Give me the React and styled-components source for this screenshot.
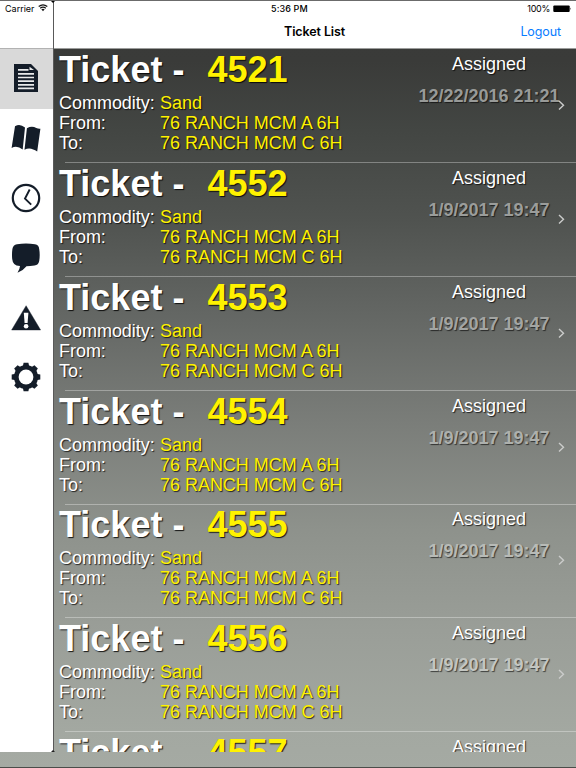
import React from "react";
import styled, { createGlobalStyle } from "styled-components";

const GlobalStyle = createGlobalStyle`
  * {
    box-sizing: border-box;
  }
  body {
    margin: 0;
    overflow: hidden;
  }
`;

const Screen = styled.div`
  width: 576px;
  height: 768px;
  display: flex;
  flex-direction: column;
  overflow: hidden;
  color: #000;
  font-family: Inter, "Liberation Sans", sans-serif;
  border-top: 1px solid #6b6b6b;
  border-bottom: 1px solid #4b4d4a;
  background: linear-gradient(
    to bottom,
    #393a38 0,
    #3a3b39 60px,
    #434643 130px,
    #505350 220px,
    #656865 320px,
    #7b7e7a 425px,
    #8e928c 530px,
    #9a9e98 630px,
    #a3a8a1 730px,
    #a5aaa3 767px
  );
`;

const Panels = styled.div`
  display: flex;
  height: 751px;
  overflow: hidden;
`;

const Sidebar = styled.div`
  width: 53px;
  flex-shrink: 0;
  display: flex;
  flex-direction: column;
  background: #fff;
`;

const SidebarHeader = styled.div`
  height: 48px;
  padding: 1px 0 0 5px;
  display: flex;
  align-items: flex-start;
  gap: 3px;
  border-bottom: 1px solid #b2b2b2;

  svg {
    margin-top: 2px;
  }
`;

const StatusText = styled.span`
  font-size: 9px;
  line-height: 13px;
  font-weight: ${(props) => (props.$bold ? 500 : 400)};
  letter-spacing: ${(props) => (props.$bold ? "0.1px" : props.$tight ? "-0.3px" : "0")};
  white-space: nowrap;
`;

const Tab = styled.div`
  height: 59.8px;
  padding: 0 0.5px 1px 0;
  display: flex;
  align-items: center;
  justify-content: center;
  background: ${(props) => (props.$active ? "#d9d9d9" : "#fff")};
`;

// thin line between the panels, with the small dark corners at both ends
const Divider = styled.div`
  position: relative;
  width: 1px;
  flex-shrink: 0;
  background: #595959;

  &::before,
  &::after {
    content: "";
    position: absolute;
    left: -2px;
    border: 2.5px solid transparent;
  }
  &::before {
    top: 0;
    border-top-color: #000;
    border-bottom: 0;
  }
  &::after {
    bottom: 0;
    border-bottom-color: #222;
    border-top: 0;
  }
`;

const Main = styled.div`
  flex: 1;
  min-width: 0;
  display: flex;
  flex-direction: column;
`;

const TopBar = styled.div`
  height: 48px;
  flex-shrink: 0;
  background: #fff;
  border-bottom: 1px solid #9b9c9b;
`;

const StatusRow = styled.div`
  height: 15px;
  padding: 1px 4px 0 217px;
  display: flex;
  justify-content: space-between;
`;

const Battery = styled.div`
  display: flex;
  gap: 3px;

  svg {
    margin-top: 3px;
  }
`;

const NavRow = styled.div`
  height: 32px;
  padding: 0 15px 0 230px;
  display: flex;
  justify-content: space-between;
  font-size: 12.5px;
  line-height: 32px;
`;

const Title = styled.span`
  font-weight: 600;
  letter-spacing: -0.1px;
`;

const Logout = styled.span`
  color: #087cff;
  letter-spacing: -0.1px;
`;

const List = styled.div`
  font-family: "Liberation Sans", sans-serif;
  font-size: 18px;
  line-height: 20px;
  color: #fff;
  text-shadow: 1px 1px 1px rgba(0, 0, 0, 0.75);
`;

const Row = styled.div`
  height: 113.85px;
  display: flex;
  background: linear-gradient(rgba(255, 255, 255, 0.32), rgba(255, 255, 255, 0.32)) 11px 113px / 100% 1px no-repeat;
`;

const Details = styled.div`
  flex: 1;
  padding-left: 5px;
`;

const Heading = styled.div`
  height: 44px;
  display: grid;
  grid-template-columns: 148.5px 1fr;
  font-size: 36px;
  font-weight: bold;
  line-height: 41px;
  text-shadow: 1px 1px 1px rgba(0, 0, 0, 0.85);
`;

const Field = styled.div`
  display: grid;
  grid-template-columns: 101px 1fr;
  white-space: nowrap;
  letter-spacing: -0.03px;
`;

const Yellow = styled.span`
  color: #fff200;
`;

const Status = styled.div`
  width: 138px;
  padding-top: 5px;
  display: flex;
  flex-direction: column;
  align-items: center;
  gap: 12px;
`;

const DateText = styled.div`
  color: ${(props) => props.$color};
  font-weight: bold;
  white-space: nowrap;
  text-shadow: 1px 1px 1px rgba(0, 0, 0, 0.6);
`;

const Arrow = styled.div`
  width: 18px;
  padding-top: 51px;
  line-height: 0;
`;

const NAVY = "#141d29";

const WifiIcon = () => (
  <svg width="10" height="8" viewBox="0 0 10 8" fill="none" stroke="#111">
    <path d="M.7 2.5Q5-.9 9.3 2.5M2.2 4.3Q5 2 7.8 4.3" strokeWidth="1.2" />
    <path d="M3.3 5.3Q5 4 6.7 5.3L5 7.2z" fill="#111" stroke="none" />
  </svg>
);

const BatteryIcon = () => (
  <svg width="19" height="8" viewBox="0 0 19 8">
    <rect x=".3" y=".5" width="16.4" height="6.6" rx="1" fill="#000" />
    <path d="M17.3 2.6q1.2 1.2 0 2.4z" fill="#000" />
  </svg>
);

const ChevronIcon = () => (
  <svg width="8" height="11" viewBox="0 0 8 11" fill="none" stroke="#cbcccb" strokeWidth="1.4">
    <path d="M1 1L5.5 5.3L1 9.6" />
  </svg>
);

const DocumentIcon = () => (
  <svg width="30" height="30" viewBox="0 0 30 30">
    <path d="M3 1h17l7 7v21H3z" fill={NAVY} />
    <path d="M7 6.9h10.5M7 10.8h16M7 14.5h16M7 18.1h16M7 21.8h16M7 25.3h16" stroke="#e9eaeb" strokeWidth="1.7" />
    <path d="M18.5 3.7V7H23z" fill="#e9eaeb" />
  </svg>
);

const BookIcon = () => (
  <svg width="30" height="30" viewBox="0 0 30 30" fill={NAVY}>
    <path d="M4 3.2Q9 .2 14 4.6L11.7 26.6Q6 21.8.6 24.9z" />
    <path d="M15.9 5.2Q21 2.3 25.3 5.1Q27.2 6 29.4 5.8L26.2 28.5Q24.2 26.8 22.2 26.5Q18 24.5 13.5 26.7z" />
  </svg>
);

const ClockIcon = () => (
  <svg width="30" height="30" viewBox="0 0 30 30" fill="none" stroke={NAVY}>
    <circle cx="15" cy="15" r="13.2" strokeWidth="2.2" />
    <path d="M18.7 6.5L14 15.6L20.2 21.6" strokeWidth="1.9" />
  </svg>
);

const ChatIcon = () => (
  <svg width="30" height="30" viewBox="0 0 30 30" fill={NAVY}>
    <path d="M6 1.2Q15-.1 24 1.2Q28 2 28.2 6Q29.2 12 28.2 18Q27.5 22 23.5 22.5Q19 23.2 15.5 23.2Q12 27.7 6.5 29.8Q8.8 26.3 9 23Q5 22.8 3.2 21Q1.5 19.2 1.2 16Q.7 11 1.4 6Q2 2 6 1.2z" />
  </svg>
);

const WarningIcon = () => (
  <svg width="30" height="30" viewBox="0 0 30 30">
    <path d="M15.1 2.7L29.6 27H.6z" fill={NAVY} stroke={NAVY} strokeWidth=".4" strokeLinejoin="round" />
    <path d="M12.8 9.8h4.6L16.6 20h-3z" fill="#fff" />
    <circle cx="15.1" cy="23.3" r="2.3" fill="#fff" />
  </svg>
);

const GearIcon = () => (
  <svg width="30" height="30" viewBox="0 0 30 30">
    {[0, 45, 90, 135].map((angle) => (
      <path
        key={angle}
        d="M12.6.7L11.4 6.5V23.5L12.6 29.3h4.8L18.6 23.5V6.5L17.4.7z"
        fill={NAVY}
        transform={`rotate(${angle} 15 15)`}
      />
    ))}
    <circle cx="15" cy="15" r="12.1" fill={NAVY} />
    <circle cx="15" cy="15" r="7.4" fill="#fff" />
  </svg>
);

const tabs = [DocumentIcon, BookIcon, ClockIcon, ChatIcon, WarningIcon, GearIcon];

const tickets = [
  { id: 4521, date: "12/22/2016 21:21", color: "#989a98" },
  { id: 4552, date: "1/9/2017 19:47", color: "#9b9d9b" },
  { id: 4553, date: "1/9/2017 19:47", color: "#a3a5a3" },
  { id: 4554, date: "1/9/2017 19:47", color: "#adb0ad" },
  { id: 4555, date: "1/9/2017 19:47", color: "#b8bbb7" },
  { id: 4556, date: "1/9/2017 19:47", color: "#c3c6c2" },
  { id: 4557 },
];

function Ticket({ ticket }) {
  return (
    <Row>
      <Details>
        <Heading>
          <span>Ticket -</span>
          <Yellow>{ticket.id}</Yellow>
        </Heading>
        {ticket.date && (
          <>
            <Field>
              <span>Commodity:</span>
              <Yellow>Sand</Yellow>
            </Field>
            <Field>
              <span>From:</span>
              <Yellow>76 RANCH MCM A 6H</Yellow>
            </Field>
            <Field>
              <span>To:</span>
              <Yellow>76 RANCH MCM C 6H</Yellow>
            </Field>
          </>
        )}
      </Details>
      <Status>
        <div>Assigned</div>
        {ticket.date && <DateText $color={ticket.color}>{ticket.date}</DateText>}
      </Status>
      <Arrow>{ticket.date && <ChevronIcon />}</Arrow>
    </Row>
  );
}

function App() {
  return (
    <Screen>
      <GlobalStyle />
      <Panels>
        <Sidebar>
          <SidebarHeader>
            <StatusText>Carrier</StatusText>
            <WifiIcon />
          </SidebarHeader>
          {tabs.map((Icon, i) => (
            <Tab key={i} $active={i === 0}>
              <Icon />
            </Tab>
          ))}
        </Sidebar>
        <Divider />
        <Main>
          <TopBar>
            <StatusRow>
              <StatusText $bold>5:36 PM</StatusText>
              <Battery>
                <StatusText $tight>100%</StatusText>
                <BatteryIcon />
              </Battery>
            </StatusRow>
            <NavRow>
              <Title>Ticket List</Title>
              <Logout>Logout</Logout>
            </NavRow>
          </TopBar>
          <List>
            {tickets.map((ticket) => (
              <Ticket key={ticket.id} ticket={ticket} />
            ))}
          </List>
        </Main>
      </Panels>
    </Screen>
  );
}

export default App;
